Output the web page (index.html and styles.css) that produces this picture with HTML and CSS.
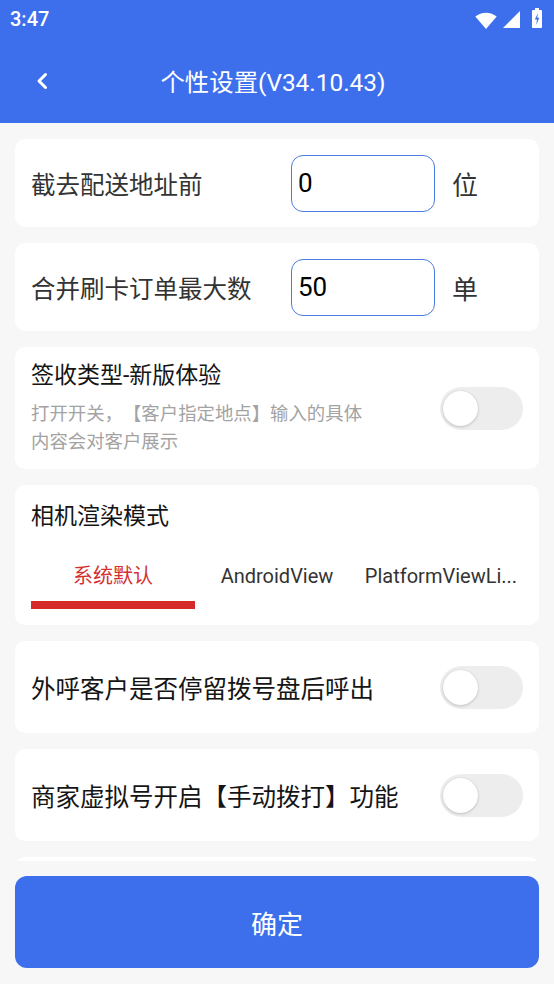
FILE: index.html
```html
<!DOCTYPE html>
<html lang="zh-CN">
<head>
<meta charset="utf-8">
<title>个性设置</title>
<link rel="stylesheet" href="styles.css">
</head>
<body>
<div class="app">
  <header class="topbar">
    <div class="status">
      <span class="time">3:47</span>
      <div class="sicons">
        <svg class="ic-wifi" width="22" height="18" viewBox="0 0 22 18"><path d="M11 18 L0.3 5.6 A16.4 16.4 0 0 1 21.7 5.6 Z" fill="#fff"/></svg>
        <svg class="ic-signal" width="17" height="17" viewBox="0 0 17 17"><path d="M17 0 V17 H0 Z" fill="#fff"/></svg>
        <svg class="ic-battery" width="10" height="20" viewBox="0 0 10 20"><rect x="3" y="0" width="4" height="2" fill="#fff"/><rect x="0" y="2" width="10" height="18" rx="1" fill="#fff"/><path d="M6 5 L2.8 11.6 H5 L4.2 17 L7.3 9.8 H5.2 Z" fill="#3D6FEC"/></svg>
      </div>
    </div>
    <div class="toolbar">
      <div class="back">
        <svg width="12" height="18" viewBox="0 0 12 18"><path d="M9.5 2.5 L3 9 L9.5 15.5" stroke="#fff" stroke-width="3" fill="none" stroke-linecap="round" stroke-linejoin="round"/></svg>
      </div>
      <h1 class="title">个性设置(V34.10.43)</h1>
      <div></div>
    </div>
  </header>

  <main class="content">
    <section class="card row input-row">
      <span class="label">截去配送地址前</span>
      <div class="field">0</div>
      <span class="unit">位</span>
    </section>

    <section class="card row input-row">
      <span class="label">合并刷卡订单最大数</span>
      <div class="field">50</div>
      <span class="unit">单</span>
    </section>

    <section class="card row desc-card">
      <div class="desc-text">
        <div class="desc-title">签收类型-新版体验</div>
        <div class="desc-sub">打开开关，【客户指定地点】输入的具体内容会对客户展示</div>
      </div>
      <div class="switch"></div>
    </section>

    <section class="card tabs-card">
      <div class="desc-title">相机渲染模式</div>
      <div class="tabs">
        <div class="tab active"><div class="tab-text">系统默认</div><div class="tab-bar"></div></div>
        <div class="tab"><div class="tab-text">AndroidView</div><div class="tab-bar"></div></div>
        <div class="tab"><div class="tab-text">PlatformViewLi...</div><div class="tab-bar"></div></div>
      </div>
    </section>

    <section class="card row switch-row">
      <span class="label dark">外呼客户是否停留拨号盘后呼出</span>
      <div class="switch"></div>
    </section>

    <section class="card row switch-row">
      <span class="label dark">商家虚拟号开启【手动拨打】功能</span>
      <div class="switch"></div>
    </section>

    <section class="card row switch-row"></section>
  </main>

  <footer class="footer">
    <button class="confirm">确定</button>
  </footer>
</div>
</body>
</html>
```

FILE: styles.css
```css
* { box-sizing: border-box; }

body {
  margin: 0;
  background: #F7F7F7;
  font-family: Roboto, "Noto Sans CJK SC", sans-serif;
  text-spacing-trim: space-all;
}

.app {
  width: 554px;
  height: 984px;
  display: flex;
  flex-direction: column;
  overflow: hidden;
}

.topbar {
  flex: 0 0 123px;
  background: #3D6FEC;
  color: #fff;
}

.status {
  height: 38px;
  display: flex;
  align-items: center;
  justify-content: space-between;
  padding: 0 12px 0 10px;
}

.time {
  font-size: 20px;
  font-weight: 500;
  line-height: 20px;
}

.sicons {
  display: flex;
  align-items: center;
}

.sicons svg { display: block; }
.ic-wifi { margin-right: 6px; margin-top: 1px; }
.ic-signal { margin-right: 12px; }
.ic-battery { margin-top: -2px; }

.toolbar {
  height: 85px;
  display: grid;
  grid-template-columns: 80px 1fr 88px;
  align-items: center;
}

.back {
  padding-left: 36px;
  display: flex;
  align-items: center;
}

.title {
  margin: 0;
  font-size: 24.4px;
  font-weight: 400;
  text-align: center;
  white-space: nowrap;
}

.content {
  flex: 1 1 auto;
  min-height: 0;
  overflow: hidden;
  padding: 16px 15px 0;
  display: flex;
  flex-direction: column;
  gap: 16px;
}

.card {
  flex-shrink: 0;
  background: #fff;
  border-radius: 10px;
  padding: 0 16px;
}

.row {
  display: flex;
  align-items: center;
}

.input-row { height: 88px; }

.label {
  font-size: 24.5px;
  color: #333;
  white-space: nowrap;
}

.label.dark { color: #151515; }

.input-row .label { flex: 0 0 260px; }

.field {
  width: 144px;
  height: 57px;
  border: 1.5px solid #4D7CE0;
  border-radius: 12px;
  font-size: 26px;
  color: #000;
  display: flex;
  align-items: center;
  padding-left: 6px;
}

.unit {
  margin-left: 17px;
  font-size: 26px;
  color: #333;
}

.switch-row {
  height: 92px;
  justify-content: space-between;
}

.switch {
  flex-shrink: 0;
  width: 83px;
  height: 43px;
  border-radius: 22px;
  background: #EDEDED;
  position: relative;
}

.switch::after {
  content: "";
  position: absolute;
  left: 3px;
  top: 4px;
  width: 35px;
  height: 35px;
  border-radius: 50%;
  background: #fff;
  box-shadow: 0 1px 3px rgba(0, 0, 0, 0.18), 0 0 1px rgba(0, 0, 0, 0.12);
}

.desc-card {
  height: 122px;
  justify-content: space-between;
}

.desc-text { width: 340px; }

.desc-title {
  font-size: 23px;
  line-height: 32px;
  color: #151515;
}

.desc-sub {
  margin-top: 8px;
  font-size: 18.4px;
  line-height: 28px;
  color: #A3A3A3;
}

.tabs-card {
  padding: 16px 16px 16px;
}

.tabs {
  margin-top: 29px;
  display: grid;
  grid-template-columns: repeat(3, minmax(0, 1fr));
}

.tab { min-width: 0; }

.tab-text {
  font-size: 20px;
  line-height: 28px;
  text-align: center;
  color: #333;
  white-space: nowrap;
}

.tab-bar {
  margin-top: 11px;
  height: 8px;
}

.tab.active .tab-text { color: #D33030; }
.tab.active .tab-bar { background: #D62A2A; }

.footer {
  flex: 0 0 123px;
  padding: 15px 15px 16px;
}

.confirm {
  width: 100%;
  height: 92px;
  border: none;
  border-radius: 12px;
  background: #3D6FEC;
  color: #fff;
  font-family: inherit;
  font-size: 26px;
}
```
